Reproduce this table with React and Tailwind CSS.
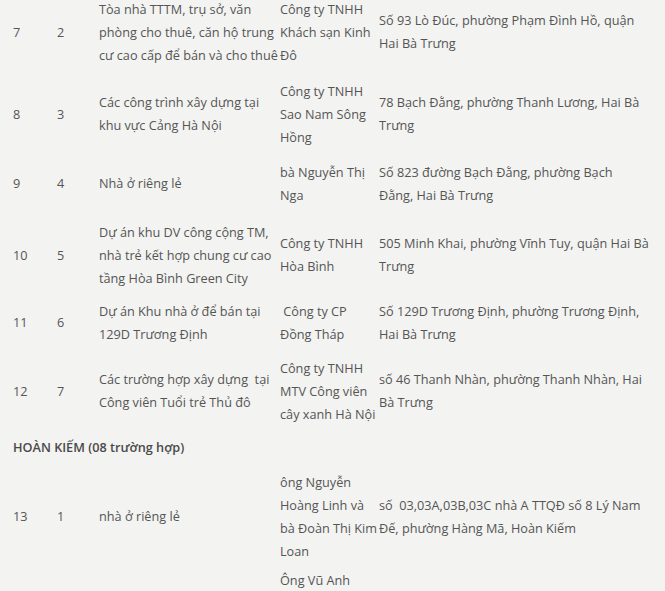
import React from "react";

const rows = [
  {
    h: 82, a: "7", b: "2",
    desc: ["Tòa nhà TTTM, trụ sở, văn", "phòng cho thuê, căn hộ trung", "cư cao cấp để bán và cho thuê"],
    comp: ["Công ty TNHH", "Khách sạn Kinh", "Đô"],
    addr: ["Số 93 Lò Đúc, phường Phạm Đình Hồ, quận", "Hai Bà Trưng"],
  },
  {
    h: 81, a: "8", b: "3",
    desc: ["Các công trình xây dựng tại", "khu vực Cảng Hà Nội"],
    comp: ["Công ty TNHH", "Sao Nam Sông", "Hồng"],
    addr: ["78 Bạch Đằng, phường Thanh Lương, Hai Bà", "Trưng"],
  },
  {
    h: 60, a: "9", b: "4",
    desc: ["Nhà ở riêng lẻ"],
    comp: ["bà Nguyễn Thị", "Nga"],
    addr: ["Số 823 đường Bạch Đằng, phường Bạch", "Đằng, Hai Bà Trưng"],
  },
  {
    h: 79, a: "10", b: "5",
    desc: ["Dự án khu DV công cộng TM,", "nhà trẻ kết hợp chung cư cao", "tầng Hòa Bình Green City"],
    comp: ["Công ty TNHH", "Hòa Bình"],
    addr: ["505 Minh Khai, phường Vĩnh Tuy, quận Hai Bà", "Trưng"],
  },
  {
    h: 57, a: "11", b: "6",
    desc: ["Dự án Khu nhà ở để bán tại", "129D Trương Định"],
    comp: ["\u00a0Công ty CP", "Đồng Tháp"],
    addr: ["Số 129D Trương Định, phường Trương Định,", "Hai Bà Trưng"],
  },
  {
    h: 79, a: "12", b: "7",
    desc: ["Các trường hợp xây dựng\u00a0 tại", "Công viên Tuổi trẻ Thủ đô"],
    comp: ["Công ty TNHH", "MTV Công viên", "cây xanh Hà Nội"],
    addr: ["số 46 Thanh Nhàn, phường Thanh Nhàn, Hai", "Bà Trưng"],
  },
];

const Lines = ({ items, className = "" }) => (
  <div className={className}>
    {items.map((t, i) => (
      <div key={i} className="whitespace-pre">{t || "\u00a0"}</div>
    ))}
  </div>
);

const Row = ({ r }) => (
  <div className="pt-[6px] box-border" style={{ height: r.h }}>
    <div className="grid grid-cols-[44px_42px_181px_99px_1fr] items-center">
      <div>{r.a}</div>
      <div>{r.b}</div>
      <Lines items={r.desc} />
      <Lines items={r.comp} />
      <Lines items={r.addr} />
    </div>
  </div>
);

export default function App() {
  return (
    <div
      className="w-[665px] h-[591px] overflow-hidden bg-[#f3f3f1] text-[#555555] text-[12.7px] leading-[23px]"
      style={{ fontFamily: '"Open Sans", "Noto Sans", sans-serif' }}
    >
      <div className="pl-[13px] -mt-[8.5px]">
        {rows.map((r, i) => (
          <Row key={i} r={r} />
        ))}
        <div className="pt-[6px] h-[35px] box-border font-semibold text-[#4a4a4a]">
          HOÀN KIẾM (08 trường hợp)
        </div>
        <div className="pt-[6px] h-[98.7px] box-border">
          <div className="grid grid-cols-[44px_42px_181px_99px_1fr] items-center">
            <div>13</div>
            <div>1</div>
            <div>nhà ở riêng lẻ</div>
            <Lines items={["ông Nguyễn", "Hoàng Linh và", "bà Đoàn Thị Kim", "Loan"]} />
            <Lines items={["số\u00a0 03,03A,03B,03C nhà A TTQĐ số 8 Lý Nam", "Đế, phường Hàng Mã, Hoàn Kiếm"]} />
          </div>
        </div>
        <div className="pt-[6px] box-border">
          <div className="grid grid-cols-[44px_42px_181px_99px_1fr] items-center">
            <div>14</div>
            <div>2</div>
            <div>nhà ở riêng lẻ</div>
            <Lines items={["Ông Vũ Anh", "Tuấn và bà", "Nguyễn Thị", "Hà"]} />
            <Lines items={["số 5 phố Hàng Chiếu, phường Đồng Xuân,", "Hoàn Kiếm"]} />
          </div>
        </div>
      </div>
    </div>
  );
}
